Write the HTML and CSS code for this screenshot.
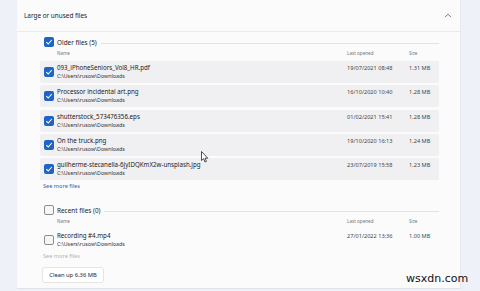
FILE: index.html
```html
<!DOCTYPE html>
<html lang="en">
<head>
  <meta charset="UTF-8" />
  <title>Large or unused files</title>
  <link rel="stylesheet" href="styles.css">
</head>
<body>
  <div class="card">
    <div class="head">
      <span>Large or unused files</span>
      <svg class="chev" width="8" height="5" viewBox="0 0 8 5"><path d="M1 4.2 L4 1.2 L7 4.2" fill="none" stroke="#666" stroke-width="0.9"/></svg>
    </div>

    <div class="body">
      <!-- Older files -->
      <div class="group-title">
        <span class="cb on"><svg viewBox="0 0 10 10"><path d="M2.3 5.2 L4.2 7 L7.8 3" fill="none" stroke="#fff" stroke-width="1.1"/></svg></span>
        <span class="label">Older files (5)</span>
        <span class="rule"></span>
      </div>
      <div class="grid cols">
        <span></span><span>Name</span><span>Last opened</span><span>Size</span>
      </div>

      <div class="grid row">
        <span class="cb on"><svg viewBox="0 0 10 10"><path d="M2.3 5.2 L4.2 7 L7.8 3" fill="none" stroke="#fff" stroke-width="1.1"/></svg></span>
        <div class="file"><div class="fname">093_iPhoneSeniors_Vol8_HR.pdf</div><div class="path">C:\Users\rusow\Downloads</div></div>
        <span class="meta">19/07/2021 08:48</span><span class="meta">1.31 MB</span>
      </div>
      <div class="grid row">
        <span class="cb on"><svg viewBox="0 0 10 10"><path d="M2.3 5.2 L4.2 7 L7.8 3" fill="none" stroke="#fff" stroke-width="1.1"/></svg></span>
        <div class="file"><div class="fname">Processor incidental art.png</div><div class="path">C:\Users\rusow\Downloads</div></div>
        <span class="meta">16/10/2020 10:40</span><span class="meta">1.28 MB</span>
      </div>
      <div class="grid row">
        <span class="cb on"><svg viewBox="0 0 10 10"><path d="M2.3 5.2 L4.2 7 L7.8 3" fill="none" stroke="#fff" stroke-width="1.1"/></svg></span>
        <div class="file"><div class="fname">shutterstock_573476356.eps</div><div class="path">C:\Users\rusow\Downloads</div></div>
        <span class="meta">01/02/2021 15:41</span><span class="meta">1.28 MB</span>
      </div>
      <div class="grid row">
        <span class="cb on"><svg viewBox="0 0 10 10"><path d="M2.3 5.2 L4.2 7 L7.8 3" fill="none" stroke="#fff" stroke-width="1.1"/></svg></span>
        <div class="file"><div class="fname">On the truck.png</div><div class="path">C:\Users\rusow\Downloads</div></div>
        <span class="meta">19/10/2020 16:13</span><span class="meta">1.24 MB</span>
      </div>
      <div class="grid row">
        <span class="cb on"><svg viewBox="0 0 10 10"><path d="M2.3 5.2 L4.2 7 L7.8 3" fill="none" stroke="#fff" stroke-width="1.1"/></svg></span>
        <div class="file"><div class="fname">guilherme-stecanella-6jyIDQKmX2w-unsplash.jpg</div><div class="path">C:\Users\rusow\Downloads</div></div>
        <span class="meta">23/07/2019 15:58</span><span class="meta">1.23 MB</span>
      </div>
      <div class="more">See more files</div>

      <!-- Recent files -->
      <div class="group-title recent">
        <span class="cb"></span>
        <span class="label">Recent files (0)</span>
        <span class="rule"></span>
      </div>
      <div class="grid cols">
        <span></span><span>Name</span><span>Last opened</span><span>Size</span>
      </div>
      <div class="grid row plain">
        <span class="cb"></span>
        <div class="file"><div class="fname">Recording #4.mp4</div><div class="path">C:\Users\rusow\Downloads</div></div>
        <span class="meta">27/01/2022 13:36</span><span class="meta">1.00 MB</span>
      </div>
      <div class="more off">See more files</div>

      <button class="clean">Clean up 6.36 MB</button>
    </div>
  </div>

  <svg class="cursor" width="8" height="12" viewBox="0 0 8 12"><path d="M0.5 0.5 L0.5 9.5 L2.6 7.6 L4 11 L5.4 10.4 L4 7.2 L6.8 7.2 Z" fill="#fff" stroke="#222" stroke-width="0.8"/></svg>
  <div class="mark">wsxdn.com</div>
</body>
</html>
```

FILE: styles.css
```css
body {
  margin: 0;
  width: 480px;
  height: 291px;
  overflow: hidden;
  background: #eef1f8;
  font-family: 'Noto Sans', 'Open Sans', sans-serif;
  color: #1b1b1b;
  position: relative;
}
.card {
  margin-left: 17px;
  width: 444px;
  height: 289px;
  background: #fbfbfc;
  border-right: 1px solid #e6e8ee;
  border-bottom: 1px solid #dfe3eb;
  box-sizing: border-box;
}
.head {
  height: 31px;
  border-bottom: 1px solid #ebebeb;
  display: flex;
  align-items: center;
  justify-content: space-between;
  padding: 0 8px 0 7px;
  font-size: 6.4px;
  color: #222;
}
.chev {
  margin-top: -1px;
}
.body {
  padding: 5px 21px 0 23px;
}

/* group titles */
.group-title {
  display: flex;
  align-items: center;
  height: 10px;
  padding-left: 4px;
  font-size: 6.4px;
}
.group-title .label {
  margin-left: 3px;
}
.group-title .rule {
  flex: 1;
  height: 1px;
  background: #e3e3e3;
  margin-left: 4px;
  margin-top: 2px;
}
.group-title.recent {
  margin-top: 15px;
}

/* checkboxes */
.cb {
  width: 10px;
  height: 10px;
  box-sizing: border-box;
  border-radius: 2px;
  border: 1px solid #8d8d8d;
  background: #f6f6f6;
  display: block;
}
.cb.on {
  border: none;
  background: #1e64c4;
}
.cb svg {
  width: 10px;
  height: 10px;
  display: block;
}

/* table */
.grid {
  display: grid;
  grid-template-columns: 17px 1fr 62px 30px;
  align-items: start;
}
.cols {
  margin-top: 2px;
  height: 8px;
  line-height: 8px;
  font-size: 4.6px;
  color: #777;
  margin-bottom: 4px;
}
.row {
  height: 22px;
  background: #f0f0f2;
  border-radius: 2px;
  margin-bottom: 2.3px;
  align-items: center;
}
.row.plain {
  background: transparent;
  margin-bottom: 1px;
}
.row .cb {
  margin-left: 4px;
}
.file {
  line-height: 8px;
}
.fname {
  font-size: 6.2px;
  color: #1b1b1b;
}
.path {
  font-size: 5.3px;
  color: #333;
}
.meta {
  font-size: 5.6px;
  color: #444;
  align-self: start;
  margin-top: 3px;
  line-height: 8px;
}
.more {
  font-size: 5.6px;
  color: #2b65b8;
  padding-left: 3px;
  margin-top: -0.3px;
  height: 8px;
  line-height: 8px;
}
.more.off {
  color: #b4b4b4;
}
.clean {
  display: block;
  margin: 7px 0 0 2px;
  height: 16px;
  width: 62px;
  padding: 0;
  background: #fff;
  border: 1px solid #e4e4e4;
  border-radius: 3px;
  font-family: inherit;
  font-size: 5.8px;
  color: #1b1b1b;
}

/* overlays */
.cursor {
  position: absolute;
  left: 201px;
  top: 151px;
}
.mark {
  position: absolute;
  left: 406px;
  top: 272px;
  font-family: 'DejaVu Sans', sans-serif;
  font-size: 11px;
  color: #111;
}
```
